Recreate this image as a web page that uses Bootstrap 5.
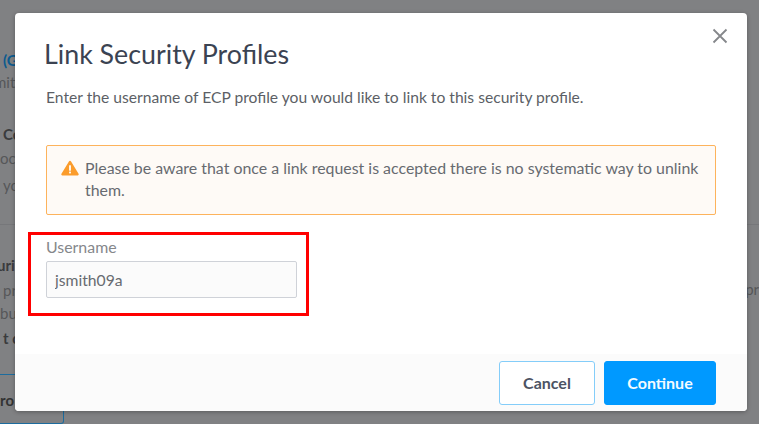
<!DOCTYPE html>
<html lang="en">
<head>
  <meta charset="UTF-8">
  <meta name="viewport" content="width=device-width, initial-scale=1.0">
  <title>Link Security Profiles</title>
  <link href="https://cdn.jsdelivr.net/npm/bootstrap@5.3.0/dist/css/bootstrap.min.css" rel="stylesheet">
  <style>
    html, body { height: 100%; overflow: hidden; }
    body { background: #808183; font-family: "Lato", "Liberation Sans", sans-serif; color: #58595c; }

    /* page behind the dialog */
    .page-behind { height: 424px; overflow: hidden; font-size: 15px; line-height: 20px; color: #565759; }
    .page-left { padding-top: 50px; padding-left: 3px; }
    .page-link { color: #0b5a8e; font-weight: 700; }
    .page-strong { color: #3a3b3d; font-weight: 700; }
    .shift-far { margin-left: -9px; }
    .shift-mid { margin-left: -6px; }
    .shift-near { margin-left: -3px; }
    .line-2 { margin-top: 2px; }
    .line-3 { margin-top: 3px; }
    .line-5 { margin-top: 5px; }
    .line-7 { margin-top: 7px; }
    .line-32 { margin-top: 32px; }
    .page-rule { border-top: 1px solid #76777a; margin: 29px 0 30px -3px; }
    .page-btn { display: block; width: 64px; height: 50px; margin-top: 26px; margin-left: -3px; padding: 15px 0 0 0; border: 1px solid #1c6c9e; border-left: 0; border-radius: 0 3px 3px 0; color: #333; font-weight: 700; }
    .page-right { position: absolute; right: 0; top: 279px; }

    /* dialog */
    .link-modal { position: absolute; left: 15px; top: 13px; width: 732px; height: 398px; border: 0; border-radius: 4px; box-shadow: 0 1px 4px rgba(0,0,0,.3); display: flex; flex-direction: column; background: #fff; }
    .link-head { padding: 24px 29px 0; display: flex; justify-content: space-between; align-items: flex-start; }
    .link-title { font-size: 26.800px; font-weight: 400; line-height: 34px; color: #3b4352; margin: 0; }
    .link-close { background: none; border: 0; padding: 0; margin: -9px -10px 0 0; line-height: 0; }
    .link-body { padding: 0 31px; flex: 1; }
    .link-intro { font-size: 15.650px; line-height: 20px; margin: 16px 0 0; color: #5c5f66; }
    .link-alert { margin: 38px 0 0; height: 70px; padding: 11px 14px 0 14px; background: #fefaf6; border: 1px solid #fdb35c; border-radius: 2px; color: #676a70; font-size: 15.900px; line-height: 22px; }
    .link-alert svg { flex: none; margin: 3px 6px 0 0; }
    .user-box { margin-top: 22px; width: 251px; }
    .user-label { font-size: 15.900px; line-height: 20px; color: #85878b; margin: 0 0 4px; display: block; }
    .user-input { height: 37px; border: 1px solid #cfd2d8; border-radius: 2px; background: #fbfbfb; padding: 0 8px; font-size: 15.700px; color: #686b71; box-shadow: none; }
    .link-foot { height: 57px; background: #fbfbfb; padding: 7px 31px 0 0; display: flex; justify-content: flex-end; gap: 9px; border-radius: 0 0 4px 4px; align-items: flex-start; }
    .btn-cancel, .btn-go { height: 44px; font-size: 16px; font-weight: 700; border-radius: 3px; padding: 0; }
    .btn-cancel { width: 96px; background: #fff; border: 1px solid #84cdf9; color: #4c5363; }
    .btn-go { width: 112px; background: #0099ff; border: 1px solid #0099ff; color: #f4fbff; }

    /* annotation drawn on the screenshot */
    .red-mark { position: absolute; left: 28px; top: 232px; width: 281px; height: 84px; border: 3px solid #f00; pointer-events: none; }
  </style>
</head>
<body>

  <div class="page-behind position-relative">
    <div class="page-left">
      <div class="page-link">(G</div>
      <div class="line-2 shift-far">mit</div>
      <div class="page-strong line-32">Co</div>
      <div class="mt-1 shift-near">oc</div>
      <div class="line-7">yc</div>
      <div class="page-rule"></div>
      <div class="page-strong shift-mid">uri</div>
      <div class="line-5">pr</div>
      <div class="line-3 shift-near">bu</div>
      <div class="page-strong line-5">t c</div>
      <a class="page-btn text-decoration-none">ro</a>
    </div>
    <div class="page-right">pr</div>
  </div>

  <div class="modal-content link-modal">
    <div class="link-head">
      <h5 class="link-title">Link Security Profiles</h5>
      <button type="button" class="link-close" aria-label="Close">
        <svg width="16" height="16" viewBox="0 0 16 16"><path d="M1.500 1.500l13 13M14.500 1.500l-13 13" stroke="#85878b" stroke-width="1.800" fill="none"/></svg>
      </button>
    </div>
    <div class="link-body">
      <p class="link-intro">Enter the username of ECP profile you would like to link to this security profile.</p>
      <div class="link-alert d-flex">
        <svg width="18" height="16" viewBox="0 0 20 17"><path d="M10 .5c.5 0 .9.3 1.200.8l8.300 13.600c.5.8 0 1.800-1 1.800H1.500c-1 0-1.500-1-1-1.800L8.800 1.300C9.100.8 9.500.5 10 .5z" fill="#fb9c2c"/><rect x="9" y="5.500" width="2" height="6" fill="#fff"/><rect x="9" y="12.500" width="2" height="2" fill="#fff"/></svg>
        <div>Please be aware that once a link request is accepted there is no systematic way to unlink them.</div>
      </div>
      <div class="user-box">
        <label class="user-label" for="username">Username</label>
        <input id="username" class="form-control user-input" value="jsmith09a">
      </div>
    </div>
    <div class="link-foot">
      <button type="button" class="btn btn-cancel">Cancel</button>
      <button type="button" class="btn btn-go">Continue</button>
    </div>
  </div>

  <div class="red-mark"></div>

  <script src="https://cdn.jsdelivr.net/npm/bootstrap@5.3.0/dist/js/bootstrap.bundle.min.js"></script>
</body>
</html>
